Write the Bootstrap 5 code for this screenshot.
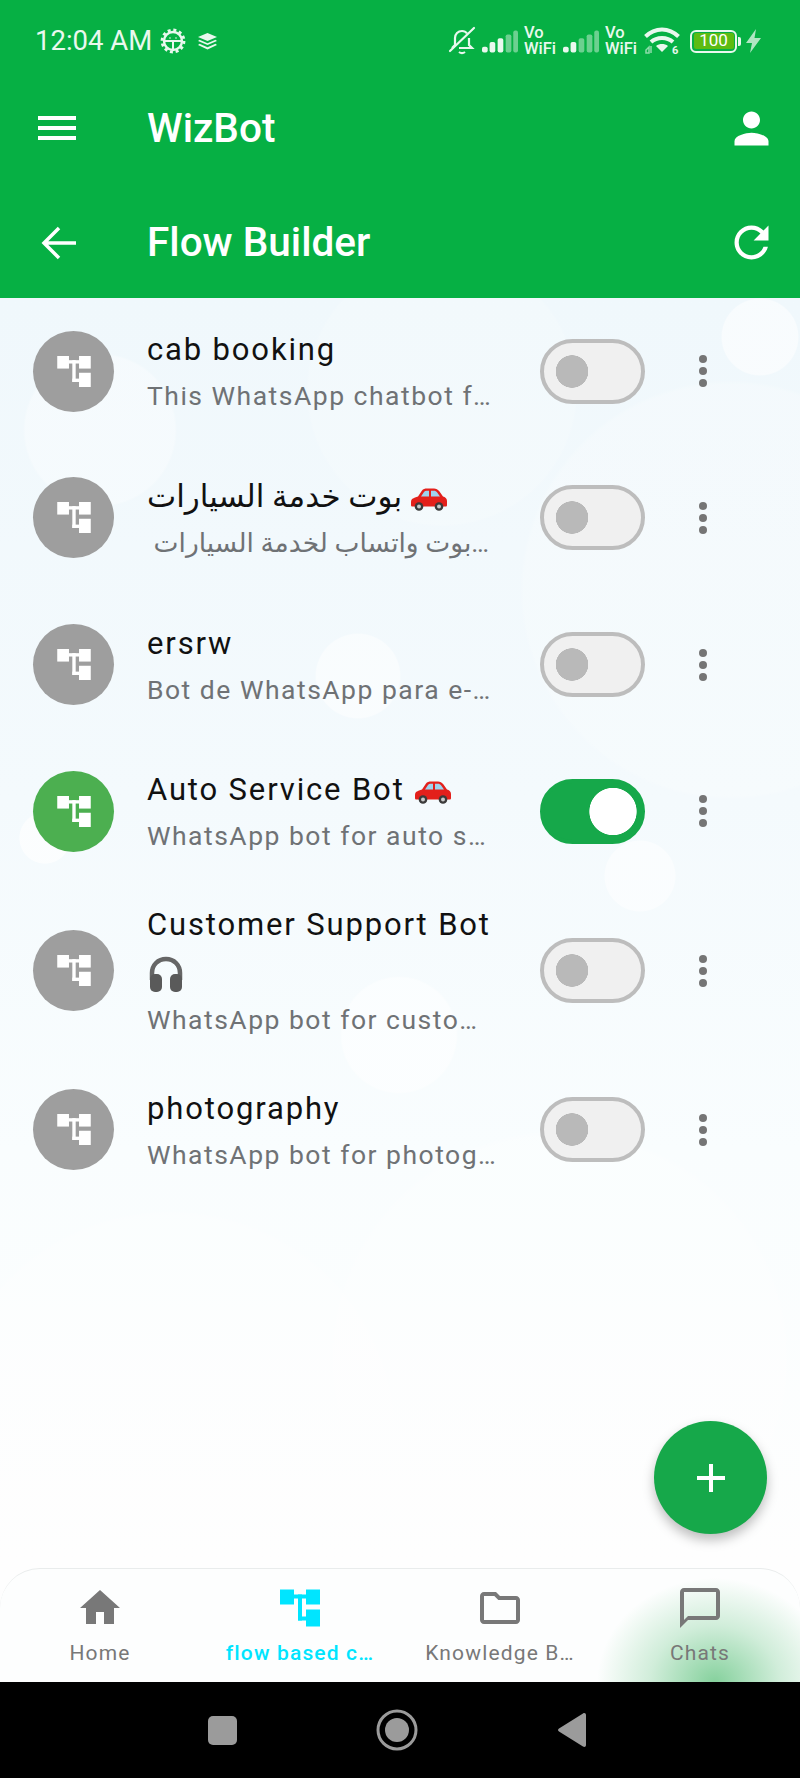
<!DOCTYPE html>
<html lang="en">
<head>
  <meta charset="UTF-8">
  <meta name="viewport" content="width=device-width, initial-scale=1">
  <title>WizBot Flow Builder</title>

  <!-- Bootstrap CSS -->
  <link href="https://cdn.jsdelivr.net/npm/bootstrap@5.3.0/dist/css/bootstrap.min.css" rel="stylesheet">

  <style>
    html, body { height: 100%; }
    body {
      width: 800px; height: 1778px; overflow: hidden;
      font-family: Roboto, "DejaVu Sans", sans-serif;
      background:
        radial-gradient(circle 77px at 100px 430px, rgba(255,255,255,.32) 97%, transparent),
        radial-gradient(circle 136px at 442px 391px, rgba(255,255,255,.16) 98%, transparent),
        radial-gradient(circle 39px at 760px 337px, rgba(255,255,255,.55) 97%, transparent),
        radial-gradient(circle 43px at 358px 676px, rgba(255,255,255,.5) 97%, transparent),
        radial-gradient(circle 36px at 640px 876px, rgba(255,255,255,.55) 97%, transparent),
        radial-gradient(circle 26px at 45px 838px, rgba(255,255,255,.65) 97%, transparent),
        radial-gradient(circle 59px at 399px 1035px, rgba(255,255,255,.5) 97%, transparent),
        radial-gradient(circle 210px at 730px 590px, rgba(255,255,255,.2) 98%, transparent),
        radial-gradient(circle 230px at 170px 1440px, rgba(255,255,255,.25) 98%, transparent),
        radial-gradient(circle 230px at 560px 1360px, rgba(255,255,255,.25) 98%, transparent),
        linear-gradient(180deg, #f0f8fc 298px, #f4fafd 800px, #f9fdfe 1150px, #fefefe 1560px);
    }

    /* green header */
    .app-top { background: #06b044; color: #fff; height: 298px; flex: none; }
    .status-row { height: 82px; padding: 0 38px 0 35px; color: #e9f8ee; }
    .status-row > *, .status-right > * { flex: none; }
    .status-right { gap: 6px; }
    .status-time { font-size: 27.5px; line-height: 1; }
    .status-gap { margin-left: 12px; }
    .vo-wifi { font-size: 16.5px; line-height: 16px; font-weight: 500; width: 33px; }
    .batt-box { width: 47px; height: 23px; border: 2.5px solid #e9f8ee; border-radius: 6px; padding: 1.5px; }
    .batt-fill { display: block; height: 100%; background: #5dbb12; border-radius: 2px; color: #fff; font-size: 17px; line-height: 15px; text-align: center; }
    .batt-nub { width: 3px; height: 9px; background: #e9f8ee; border-radius: 0 2px 2px 0; margin-left: 1px; }
    .bar-row { height: 92px; padding-left: 38px; }
    .bar-row-lower { height: 124px; padding-top: 13px; }
    .bar-title { font-size: 40.5px; font-weight: 500; line-height: 1; margin: 0; }
    .bar-left { width: 109px; flex: none; }
    .back-arrow { margin-left: 3px; }
    .bar-right { margin-left: auto; margin-right: 23px; }

    /* list */
    .flow-main { flex: 1 1 auto; position: relative; min-height: 0; }
    .flow-row { height: 146.67px; padding: 0 0 0 33px !important; background: transparent; border: 0; }
    .flow-row-tall { height: 172px; }
    .flow-avatar { width: 81px; height: 81px; background: #9e9e9e; margin-right: 33px; flex: none; }
    .flow-avatar-on { background: #4caf50; }
    .flow-text { width: 353px; margin-right: 40px; flex: none; }
    .flow-title { font-size: 31px; line-height: 49px; letter-spacing: 1.85px; color: #111; }
    .flow-sub { font-size: 26.5px; line-height: 43px; letter-spacing: 1.5px; color: #6f7275; white-space: nowrap; }
    .flow-emoji { vertical-align: -4px; }
    .flow-emoji-low { vertical-align: -9px; }

    .form-switch .flow-toggle {
      width: 105px; height: 65px; margin: 0; flex: none; float: none;
      border: 4px solid #bdbdbd; border-radius: 33px; background-color: #f0f0f0;
      background-image: radial-gradient(circle 16.5px at 28px 50%, #b9b9b9 97%, transparent);
      background-position: 0 0; box-shadow: none;
    }
    .form-switch .flow-toggle:checked {
      border-color: #16a84a; background-color: #16a84a;
      background-image: radial-gradient(circle 24px at 69px 50%, #fff 97%, transparent);
    }
    .flow-kebab { margin-left: 54px; gap: 4px; flex: none; }
    .flow-kebab i { display: block; width: 8px; height: 8px; border-radius: 50%; background: #757575; }

    .fab-add {
      width: 113px; height: 113px; right: 33px; bottom: 34px; padding: 0;
      background: #16a84a; border: 0; box-shadow: 0 6px 12px rgba(0,0,0,.26);
    }

    /* bottom tabs */
    .tab-bar {
      height: 114px; flex: none; border-top: 1px solid #e9ecec; border-radius: 40px 40px 0 0;
      background:
        radial-gradient(ellipse 118px 105px at 715px 114px, rgba(76,187,110,.68), rgba(76,187,110,.25) 55%, rgba(76,187,110,0) 100%),
        #fdfefe;
    }
    .tab-item { width: 200px; padding-top: 15px; color: #787878; }
    .tab-icon { width: 48px; height: 48px; }
    .tab-flow { width: 40px; }
    .tab-label { font-size: 21px; line-height: 26px; letter-spacing: 1.15px; margin-top: 8px; white-space: nowrap; }
    .tab-on { color: #00e5ff; font-weight: 500; }

    /* android nav */
    .sys-nav { height: 96px; flex: none; background: #000; padding-right: 6px; }
    .sys-cell { width: 175px; }
    .sys-square { width: 29px; height: 29px; background: #9b9b9b; border-radius: 5px; }
  </style>
</head>
<body class="d-flex flex-column">

  <svg width="0" height="0" class="d-none">
    <symbol id="flowIcon" viewBox="0 0 40 37">
      <g fill="currentColor">
        <rect x="0" y="0" width="14" height="15"/>
        <rect x="26" y="0" width="14" height="15"/>
        <rect x="26" y="20" width="14" height="17"/>
        <rect x="14" y="5" width="12" height="4"/>
        <rect x="18" y="5" width="4" height="26"/>
        <rect x="18" y="27" width="8" height="4"/>
      </g>
    </symbol>
    <symbol id="carIcon" viewBox="0 0 38 24">
      <path fill="#e3201b" d="M2 12c2-1 4-2 6-2.500L12 3.500C13 2 15 1.500 17 1.500h7c2 0 4 1 5.500 3L33 9.500c2 .5 4 2 4 4.500v4c0 1-.5 1.500-1.500 1.500h-33C1.500 19.500 1 19 1 18v-3c0-1 .2-2 1-3z"/>
      <path fill="#9fd3ee" d="M11 9.500l3-4.500c.6-.8 1.500-1.200 2.500-1.200H19v5.700zM21 3.800h3c1.200 0 2.400.6 3.200 1.700L30 9.500h-9z"/>
      <circle cx="9" cy="19.500" r="4.300" fill="#3b3b3b"/><circle cx="9" cy="19.500" r="2" fill="#c9c9c9"/>
      <circle cx="29" cy="19.500" r="4.300" fill="#3b3b3b"/><circle cx="29" cy="19.500" r="2" fill="#c9c9c9"/>
    </symbol>
    <symbol id="signalIcon" viewBox="0 0 38 25">
      <rect x="0" y="18" width="6" height="6" rx="2" fill="currentColor"/>
      <rect x="8" y="13" width="6" height="11" rx="2" fill="currentColor"/>
      <rect x="16.500" y="9" width="6" height="15" rx="2" fill="currentColor"/>
      <rect x="25" y="5" width="6" height="19" rx="2" fill="currentColor" opacity=".45"/>
      <rect x="33" y="1" width="5" height="23" rx="2" fill="currentColor" opacity=".45"/>
    </symbol>
    <symbol id="signalIconDim" viewBox="0 0 38 25">
      <rect x="0" y="18" width="6" height="6" rx="2" fill="currentColor"/>
      <rect x="8" y="13" width="6" height="11" rx="2" fill="currentColor"/>
      <rect x="16.500" y="9" width="6" height="15" rx="2" fill="currentColor" opacity=".45"/>
      <rect x="25" y="5" width="6" height="19" rx="2" fill="currentColor" opacity=".45"/>
      <rect x="33" y="1" width="5" height="23" rx="2" fill="currentColor" opacity=".45"/>
    </symbol>
  </svg>

  <header class="app-top">
    <!-- status bar -->
    <div class="status-row d-flex align-items-center">
      <span class="status-time">12:04 AM</span>
      <svg class="ms-2" width="26" height="26" viewBox="0 0 26 26" fill="none" stroke="currentColor">
        <circle cx="13" cy="13" r="9" stroke-width="2.400"/>
        <circle cx="13" cy="13" r="11" stroke-width="2.800" stroke-dasharray="3 2.760"/>
        <path d="M5 13h16M13 13v8" stroke-width="2"/>
        <circle cx="10" cy="10" r=".8" fill="currentColor" stroke="none"/><circle cx="16" cy="10" r=".8" fill="currentColor" stroke="none"/>
      </svg>
      <svg class="status-gap" width="19" height="17" viewBox="0 0 19 17" fill="currentColor">
        <path d="M9.500 0L19 4l-9.500 4L0 4z"/><path d="M1.500 6.800l8 3.400 8-3.400 1.500 1.200-9.500 4L0 8z"/><path d="M1.500 10.800l8 3.400 8-3.400 1.500 1.200-9.500 4.500L0 12z"/>
      </svg>

      <div class="status-right d-flex align-items-center ms-auto">
        <svg width="28" height="30" viewBox="0 0 28 30" fill="none" stroke="currentColor" stroke-width="2.200">
          <path d="M7 19v-7c0-4 3-7 7-7 2 0 4 1 5 2.500M21 12v7l3 3H11M7 19l-3 3"/>
          <path d="M11 26c2 1.600 4 1.600 6 0"/>
          <path d="M2 25L26 2" stroke-linecap="round"/>
        </svg>
        <svg width="36" height="25"><use href="#signalIcon"/></svg>
        <div class="vo-wifi"><span class="d-block">Vo</span><span class="d-block">WiFi</span></div>
        <svg width="36" height="25"><use href="#signalIconDim"/></svg>
        <div class="vo-wifi"><span class="d-block">Vo</span><span class="d-block">WiFi</span></div>
        <svg class="me-1" width="36" height="28" viewBox="0 0 36 28" fill="none" stroke="currentColor">
          <path d="M1.500 9.500c9.500-9.500 23.500-9.500 33 0" stroke-width="4"/>
          <path d="M7 15c6-5.500 16-5.500 22 0" stroke-width="4"/>
          <path d="M18 25l-6-6c3.500-2.600 8.500-2.600 12 0z" fill="currentColor" stroke="none"/>
          <path d="M2 26v-3l3-3v6zM7 26v-7" stroke-width="1.500" opacity=".6"/>
          <text x="28" y="27" font-size="11" font-weight="700" font-family="Roboto" fill="currentColor" stroke="none">6</text>
        </svg>
        <div class="d-flex align-items-center">
          <div class="batt-box"><span class="batt-fill">100</span></div>
          <span class="batt-nub d-block"></span>
          <svg class="ms-1" width="17" height="24" viewBox="0 0 17 24" fill="currentColor" opacity=".75">
            <path d="M11 0L1 14h6l-2 10L16 9H9.500z"/>
          </svg>
        </div>
      </div>
    </div>

    <!-- app bar -->
    <div class="bar-row d-flex align-items-center">
      <div class="bar-left">
        <svg class="d-block" width="38" height="24" viewBox="0 0 38 24" fill="#fff">
          <rect y="0" width="38" height="4"/><rect y="10" width="38" height="4"/><rect y="20" width="38" height="4"/>
        </svg>
      </div>
      <h1 class="bar-title">WizBot</h1>
      <svg class="bar-right" width="51" height="51" viewBox="0 0 24 24" fill="#fff">
        <path d="M12 12c2.210 0 4-1.790 4-4s-1.790-4-4-4-4 1.790-4 4 1.790 4 4 4zm0 2c-2.670 0-8 1.340-8 4v2h16v-2c0-2.660-5.330-4-8-4z"/>
      </svg>
    </div>

    <!-- page bar -->
    <div class="bar-row bar-row-lower d-flex align-items-center">
      <div class="bar-left">
        <svg class="back-arrow d-block" width="36" height="36" viewBox="0 0 36 36" fill="none" stroke="#fff" stroke-width="3.500">
          <path d="M35 18H4M18 3L3 18l15 15"/>
        </svg>
      </div>
      <h2 class="bar-title">Flow Builder</h2>
      <svg class="bar-right" width="51" height="51" viewBox="0 0 24 24" fill="#fff">
        <path d="M17.650 6.350C16.200 4.900 14.210 4 12 4c-4.420 0-7.990 3.580-7.990 8s3.570 8 7.990 8c3.730 0 6.840-2.550 7.730-6h-2.080c-.82 2.330-3.040 4-5.650 4-3.310 0-6-2.690-6-6s2.690-6 6-6c1.660 0 3.140.69 4.220 1.780L13 11h7V4l-2.350 2.350z"/>
      </svg>
    </div>
  </header>

  <main class="flow-main">
    <div class="list-group list-group-flush">

      <div class="list-group-item flow-row d-flex align-items-center">
        <div class="flow-avatar rounded-circle d-flex align-items-center justify-content-center text-white"><svg width="34" height="31"><use href="#flowIcon"/></svg></div>
        <div class="flow-text">
          <div class="flow-title">cab booking</div>
          <div class="flow-sub">This WhatsApp chatbot f…</div>
        </div>
        <div class="form-check form-switch p-0 m-0 d-flex"><input class="form-check-input flow-toggle" type="checkbox" role="switch"></div>
        <div class="flow-kebab d-flex flex-column"><i></i><i></i><i></i></div>
      </div>

      <div class="list-group-item flow-row d-flex align-items-center">
        <div class="flow-avatar rounded-circle d-flex align-items-center justify-content-center text-white"><svg width="34" height="31"><use href="#flowIcon"/></svg></div>
        <div class="flow-text">
          <div class="flow-title">بوت خدمة السيارات <svg class="flow-emoji" width="38" height="24"><use href="#carIcon"/></svg></div>
          <div class="flow-sub">&nbsp;بوت واتساب لخدمة السيارات…</div>
        </div>
        <div class="form-check form-switch p-0 m-0 d-flex"><input class="form-check-input flow-toggle" type="checkbox" role="switch"></div>
        <div class="flow-kebab d-flex flex-column"><i></i><i></i><i></i></div>
      </div>

      <div class="list-group-item flow-row d-flex align-items-center">
        <div class="flow-avatar rounded-circle d-flex align-items-center justify-content-center text-white"><svg width="34" height="31"><use href="#flowIcon"/></svg></div>
        <div class="flow-text">
          <div class="flow-title">ersrw</div>
          <div class="flow-sub">Bot de WhatsApp para e-…</div>
        </div>
        <div class="form-check form-switch p-0 m-0 d-flex"><input class="form-check-input flow-toggle" type="checkbox" role="switch"></div>
        <div class="flow-kebab d-flex flex-column"><i></i><i></i><i></i></div>
      </div>

      <div class="list-group-item flow-row d-flex align-items-center">
        <div class="flow-avatar flow-avatar-on rounded-circle d-flex align-items-center justify-content-center text-white"><svg width="34" height="31"><use href="#flowIcon"/></svg></div>
        <div class="flow-text">
          <div class="flow-title">Auto Service Bot <svg class="flow-emoji" width="38" height="24"><use href="#carIcon"/></svg></div>
          <div class="flow-sub">WhatsApp bot for auto s…</div>
        </div>
        <div class="form-check form-switch p-0 m-0 d-flex"><input class="form-check-input flow-toggle" type="checkbox" role="switch" checked></div>
        <div class="flow-kebab d-flex flex-column"><i></i><i></i><i></i></div>
      </div>

      <div class="list-group-item flow-row flow-row-tall d-flex align-items-center">
        <div class="flow-avatar rounded-circle d-flex align-items-center justify-content-center text-white"><svg width="34" height="31"><use href="#flowIcon"/></svg></div>
        <div class="flow-text">
          <div class="flow-title">Customer Support Bot
            <svg class="flow-emoji-low" width="38" height="37" viewBox="0 0 38 37">
              <path d="M5 24v-7C5 9 11 3 19 3s14 6 14 14v7" fill="none" stroke="#666" stroke-width="4.500"/>
              <rect x="3" y="18" width="12" height="18" rx="5" fill="#5a5a5a"/>
              <rect x="23" y="18" width="12" height="18" rx="5" fill="#5a5a5a"/>
            </svg>
          </div>
          <div class="flow-sub">WhatsApp bot for custo…</div>
        </div>
        <div class="form-check form-switch p-0 m-0 d-flex"><input class="form-check-input flow-toggle" type="checkbox" role="switch"></div>
        <div class="flow-kebab d-flex flex-column"><i></i><i></i><i></i></div>
      </div>

      <div class="list-group-item flow-row d-flex align-items-center">
        <div class="flow-avatar rounded-circle d-flex align-items-center justify-content-center text-white"><svg width="34" height="31"><use href="#flowIcon"/></svg></div>
        <div class="flow-text">
          <div class="flow-title">photography</div>
          <div class="flow-sub">WhatsApp bot for photog…</div>
        </div>
        <div class="form-check form-switch p-0 m-0 d-flex"><input class="form-check-input flow-toggle" type="checkbox" role="switch"></div>
        <div class="flow-kebab d-flex flex-column"><i></i><i></i><i></i></div>
      </div>

    </div>

    <button class="btn fab-add rounded-circle position-absolute d-flex align-items-center justify-content-center" type="button">
      <svg width="30" height="30" viewBox="0 0 30 30" stroke="#fff" stroke-width="4"><path d="M15 1v28M1 15h28"/></svg>
    </button>
  </main>

  <!-- Bottom tabs -->
  <nav class="tab-bar d-flex">
    <div class="tab-item d-flex flex-column align-items-center">
      <svg class="tab-icon" viewBox="0 0 24 24" fill="currentColor"><path d="M10 20v-6h4v6h5v-8h3L12 3 2 12h3v8z"/></svg>
      <div class="tab-label">Home</div>
    </div>
    <div class="tab-item tab-on d-flex flex-column align-items-center">
      <svg class="tab-icon tab-flow"><use href="#flowIcon"/></svg>
      <div class="tab-label">flow based c…</div>
    </div>
    <div class="tab-item d-flex flex-column align-items-center">
      <svg class="tab-icon" viewBox="0 0 24 24" fill="currentColor"><path d="M20 6h-8l-2-2H4c-1.100 0-1.990.9-1.990 2L2 18c0 1.100.9 2 2 2h16c1.100 0 2-.9 2-2V8c0-1.100-.9-2-2-2zm0 12H4V6h5.170l2 2H20v10z"/></svg>
      <div class="tab-label">Knowledge B…</div>
    </div>
    <div class="tab-item d-flex flex-column align-items-center">
      <svg class="tab-icon" viewBox="0 0 24 24" fill="currentColor"><path d="M20 2H4c-1.100 0-2 .9-2 2v18l4-4h14c1.100 0 2-.9 2-2V4c0-1.100-.9-2-2-2zm0 14H6l-2 2V4h16v12z"/></svg>
      <div class="tab-label">Chats</div>
    </div>
  </nav>

  <!-- Android nav -->
  <div class="sys-nav d-flex align-items-center justify-content-center">
    <div class="sys-cell d-flex justify-content-center"><div class="sys-square"></div></div>
    <div class="sys-cell d-flex justify-content-center">
      <svg width="42" height="42" viewBox="0 0 42 42" fill="#9b9b9b"><circle cx="21" cy="21" r="19" fill="none" stroke="#9b9b9b" stroke-width="3"/><circle cx="21" cy="21" r="12"/></svg>
    </div>
    <div class="sys-cell d-flex justify-content-center">
      <svg width="30" height="36" viewBox="0 0 30 36" fill="#9b9b9b"><path d="M26 1.500c1.500-1 3-.2 3 1.500v30c0 1.700-1.500 2.500-3 1.500L2 19.500c-1.300-.9-1.300-2.100 0-3z"/></svg>
    </div>
  </div>

  <!-- Bootstrap JS -->
  <script src="https://cdn.jsdelivr.net/npm/bootstrap@5.3.0/dist/js/bootstrap.bundle.min.js"></script>
</body>
</html>
